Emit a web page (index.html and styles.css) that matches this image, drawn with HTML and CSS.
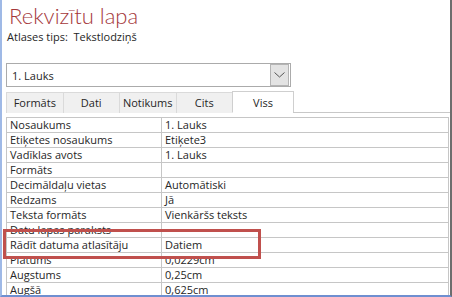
FILE: index.html
```html
<!DOCTYPE html>
<html lang="lv">
<head>
    <meta charset="UTF-8">
    <title>Rekvizītu lapa</title>
    <link rel="stylesheet" href="styles.css">
</head>
<body>
    <div class="sheet">
        <h1 class="title">Rekvizītu lapa</h1>
        <div class="selection">Atlases tips:&nbsp; Tekstlodziņš</div>

        <div class="combo">
            <span class="combo-text">1. Lauks</span>
            <span class="combo-btn">
                <svg width="11" height="6" viewBox="0 0 11 6"><path d="M0.5 0.5 L5.5 5 L10.5 0.5" fill="none" stroke="#555" stroke-width="1"/></svg>
            </span>
        </div>

        <div class="tabs">
            <div class="tab">Formāts</div>
            <div class="tab">Dati</div>
            <div class="tab">Notikums</div>
            <div class="tab">Cits</div>
            <div class="tab active">Viss</div>
            <div class="tab-rest"></div>
        </div>

        <table class="props">
            <tr><td>Nosaukums</td><td>1. Lauks</td></tr>
            <tr><td>Etiķetes nosaukums</td><td>Etiķete3</td></tr>
            <tr><td>Vadīklas avots</td><td>1. Lauks</td></tr>
            <tr><td>Formāts</td><td></td></tr>
            <tr><td>Decimāldaļu vietas</td><td>Automātiski</td></tr>
            <tr><td>Redzams</td><td>Jā</td></tr>
            <tr><td>Teksta formāts</td><td>Vienkāršs teksts</td></tr>
            <tr><td>Datu lapas paraksts</td><td></td></tr>
            <tr><td>Rādīt datuma atlasītāju</td><td>Datiem</td></tr>
            <tr><td>Platums</td><td>0,0229cm</td></tr>
            <tr><td>Augstums</td><td>0,25cm</td></tr>
            <tr><td>Augšā</td><td>0,625cm</td></tr>
        </table>

        <!-- callout around the date picker row -->
        <div class="callout"></div>
    </div>
</body>
</html>
```

FILE: styles.css
```css
body {
    margin: 0;
    width: 452px;
    height: 297px;
    overflow: hidden;
    background-color: #fff;
    font-family: "Open Sans", "Noto Sans", sans-serif;
    font-size: 11px;
    color: #262626;
}
.sheet {
    position: relative;
    height: 297px;
    border-right: 2px solid #6d6d6d;
    border-bottom: 2px solid #6f8fd0;
    box-sizing: border-box;
    width: 452px;
    border-left: 2px solid #9fb9e6;
    overflow: hidden;
}
.title {
    margin: 0;
    padding: 3px 0 0 7px;
    font-family: Lato, "Open Sans", sans-serif;
    font-size: 22px;
    font-weight: 300;
    line-height: 26px;
    color: #a4373a;
}
.selection {
    padding-left: 5px;
    margin-top: 1px;
    line-height: 14px;
}
.combo {
    margin: 19px 0 0 4px;
    width: 285px;
    height: 24px;
    border: 1px solid #ababab;
    box-sizing: border-box;
    display: flex;
    align-items: center;
    justify-content: space-between;
}
.combo-text {
    padding-left: 5px;
}
.combo-btn {
    width: 17px;
    height: 20px;
    margin-right: 1px;
    background-color: #e3e3e3;
    border: 1px solid #b4b4b4;
    display: flex;
    align-items: center;
    justify-content: center;
}
.tabs {
    display: flex;
    margin: 4px 0 0 4px;
    height: 22px;
    align-items: flex-end;
}
.tab {
    box-sizing: border-box;
    width: 57.5px;
    height: 21px;
    line-height: 20px;
    text-align: center;
    background-color: #f0f0f0;
    border: 1px solid #dadada;
    border-bottom: none;
    margin-right: -1px;
}
.tab.active {
    width: 62px;
    height: 22px;
    line-height: 22px;
    background-color: #fff;
    border-color: #cfcfcf;
    border-bottom: 1px solid #fff;
}
.tab-rest {
    flex: 1;
    align-self: stretch;
    border-bottom: 1px solid #c8c8c8;
}
.props {
    margin: 4px 0 0 4px;
    width: 443px;
    border-collapse: collapse;
}
.props td {
    height: 14px;
    padding: 0 0 0 3px;
    border: 1px solid #c6c6c6;
    line-height: 14px;
    white-space: nowrap;
}
.props td:first-child {
    width: 151px;
}
.callout {
    position: absolute;
    left: 1px;
    top: 229px;
    width: 258px;
    height: 30px;
    border: 3px solid #c0504d;
    box-sizing: border-box;
}
```
